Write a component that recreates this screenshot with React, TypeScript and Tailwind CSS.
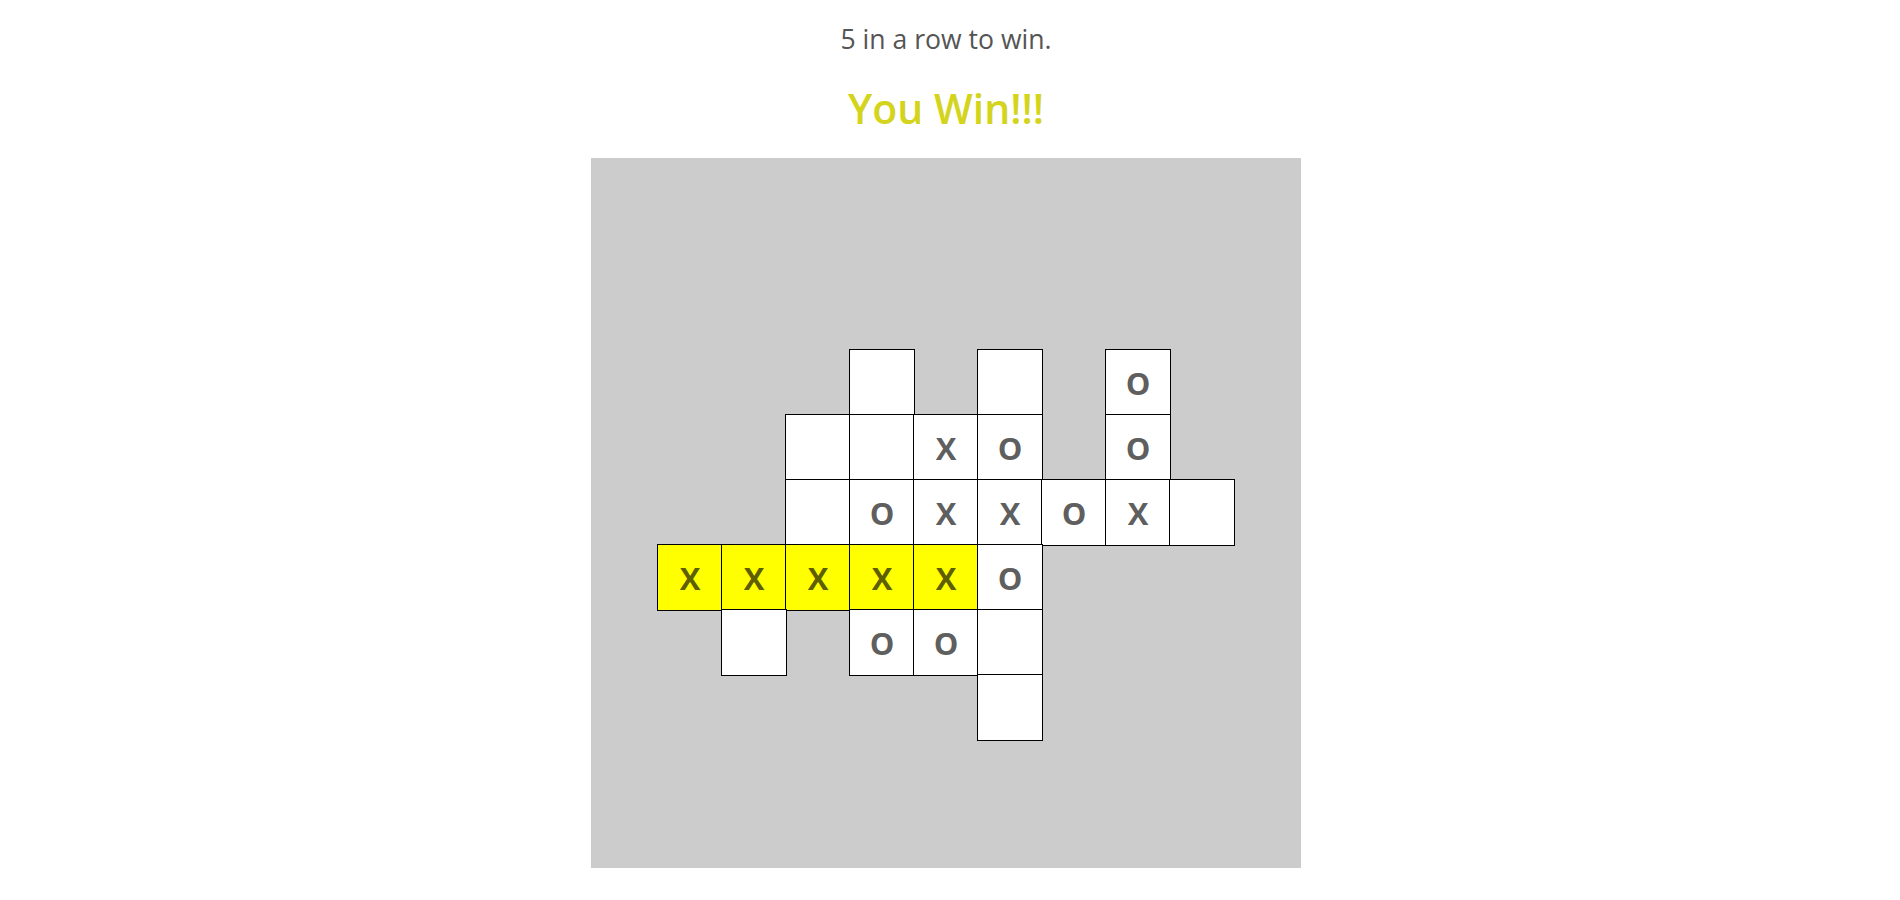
import React from "react";

// board rows: "." nothing, "_" empty cell, X / O played, W winning X
const board = [
  "...........",
  "...........",
  "...........",
  "...._._.O..",
  "...__XO.O..",
  "..._OXXOX_.",
  ".WWWWWO....",
  ".._.OO_....",
  "......_....",
  "...........",
  "...........",
];

function Cell({ v }: { v: string }) {
  if (v === ".") return <div />;
  const win = v === "W";
  return (
    <div
      className={`flex items-center justify-center pt-[1px] shadow-[0_0_0_1px_#000] text-[31px] font-bold text-black/65 ${
        win ? "bg-[#ffff00]" : "bg-white"
      }`}
    >
      {win ? "X" : v === "_" ? "" : v}
    </div>
  );
}

export default function App() {
  return (
    <div
      className="min-h-screen bg-white pr-2 pt-[21px] flex flex-col items-center"
      style={{ fontFamily: '"Open Sans", "Noto Sans", sans-serif' }}
    >
      <p className="text-[26.6px] leading-[36px] text-[#555555]">5 in a row to win.</p>
      <h1 className="mt-[27px] text-[41px] leading-[48px] font-semibold text-[#d4d41c]">
        You Win!!!
      </h1>

      <div className="mt-[26px] w-[710px] h-[710px] bg-[#cccccc] flex justify-center items-start">
        <div className="-mt-[3px] grid grid-cols-[repeat(11,64px)] grid-rows-[repeat(11,65px)]">
          {board.map((row, r) =>
            row.split("").map((v, c) => <Cell key={`${r}-${c}`} v={v} />)
          )}
        </div>
      </div>
    </div>
  );
}
